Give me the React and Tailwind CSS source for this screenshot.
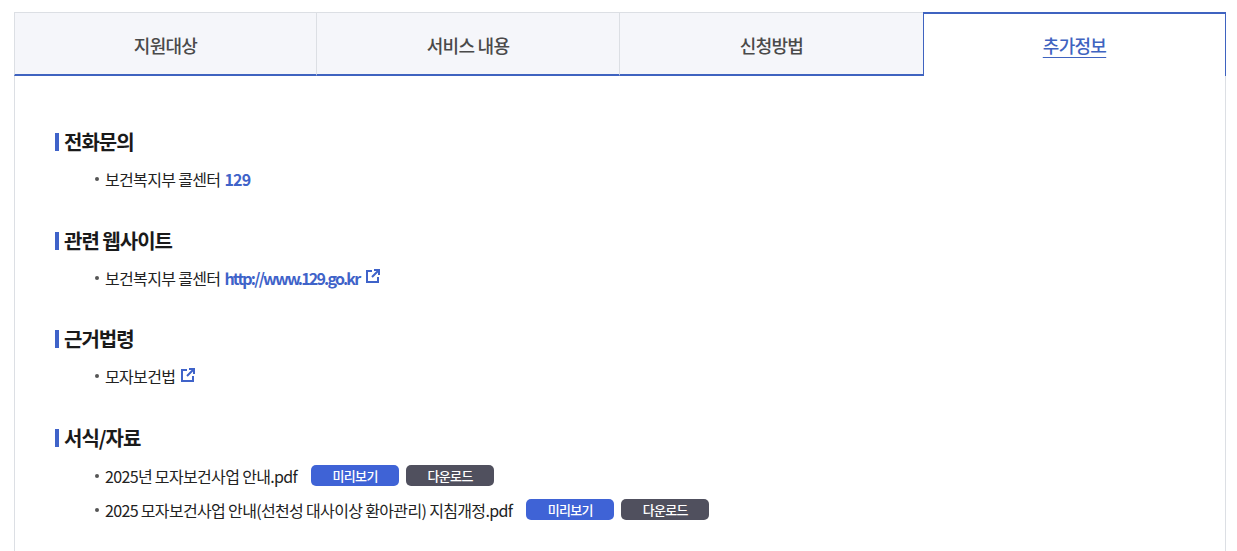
import { Fragment } from 'react'

const font = { fontFamily: '"Noto Sans CJK KR", "Noto Sans", sans-serif' }

const tabs = [
  { label: '지원대상', width: 'w-[302px]' },
  { label: '서비스 내용', width: 'w-[303px]' },
  { label: '신청방법', width: 'w-[304px]' },
  { label: '추가정보', width: 'w-[303px]', active: true },
]

function ExternalIcon() {
  return (
    <svg width="14" height="14" viewBox="0 0 14 14" fill="none" stroke="#3f63c9" strokeWidth="2" className="ml-[6px] mb-[3px] inline-block">
      <path d="M6 2H1v11h11V8" />
      <path d="M6 8 12.5 1.5M8 1h5v5" />
    </svg>
  )
}

function Section({ title, listClass = 'mt-[5px]', children }) {
  return (
    <section className="mb-[29.67px]">
      <h3 className="flex h-[30px] items-center text-[20px] font-bold tracking-[-1px] text-[#1a1a1a]">
        <span className="mr-[5px] h-[18px] w-[4px] bg-[#3f63c9]" />
        {title}
      </h3>
      <ul className={`${listClass} pl-[40px]`}>{children}</ul>
    </section>
  )
}

function Item({ children }) {
  return (
    <li className="flex h-[34px] items-center text-[16px] tracking-[-0.66px] text-[#222]">
      <span className="mr-[6px] h-[4px] w-[4px] rounded-full bg-[#555]" />
      {children}
    </li>
  )
}

function FileButtons() {
  return (
    <Fragment>
      <a className="ml-[14px] flex h-[21px] w-[88px] items-center justify-center rounded-[5px] bg-[#3f63d6] text-[13px] font-medium text-white">미리보기</a>
      <a className="ml-[7px] flex h-[21px] w-[88px] items-center justify-center rounded-[5px] bg-[#50505e] text-[13px] font-medium text-white">다운로드</a>
    </Fragment>
  )
}

export default function App() {
  return (
    <div className="h-[551px] overflow-hidden bg-white pl-[14px] pr-[11px] pt-[12px]" style={font}>
      <div className="flex h-[64px]">
        {tabs.map((tab) =>
          tab.active ? (
            <div key={tab.label} className={`${tab.width} flex items-center justify-center border-x border-t-2 border-[#3f63c0] bg-white text-[18px] font-medium tracking-[-0.7px] text-[#3f63c0] underline underline-offset-[4px]`}>
              {tab.label}
            </div>
          ) : (
            <div key={tab.label} className={`${tab.width} flex items-center justify-center border-b-2 border-l border-t border-[#dcdfe4] border-b-[#3f63c0] bg-[#f5f6fa] pt-[3px] text-[18px] font-medium tracking-[-0.7px] text-[#4a4a4a]`}>
              {tab.label}
            </div>
          )
        )}
      </div>
      <div className="h-[480px] border-x border-[#dcdfe4] pl-[40px] pt-[51px]">
        <Section title="전화문의">
          <Item>
            보건복지부 콜센터
            <b className="ml-[4px] font-bold tracking-[-0.8px] text-[#3f63c9]">129</b>
          </Item>
        </Section>
        <Section title="관련 웹사이트">
          <Item>
            보건복지부 콜센터
            <b className="ml-[4px] mr-[1px] font-bold tracking-[-1.8px] text-[#3f63c9]">http://www.129.go.kr</b>
            <ExternalIcon />
          </Item>
        </Section>
        <Section title="근거법령">
          <Item>
            모자보건법
            <ExternalIcon />
          </Item>
        </Section>
        <Section title="서식/자료" listClass="mt-[6px]">
          <Item>
            2025년 모자보건사업 안내.pdf
            <FileButtons />
          </Item>
          <Item>
            2025 모자보건사업 안내(선천성 대사이상 환아관리) 지침개정.pdf
            <FileButtons />
          </Item>
        </Section>
      </div>
    </div>
  )
}
